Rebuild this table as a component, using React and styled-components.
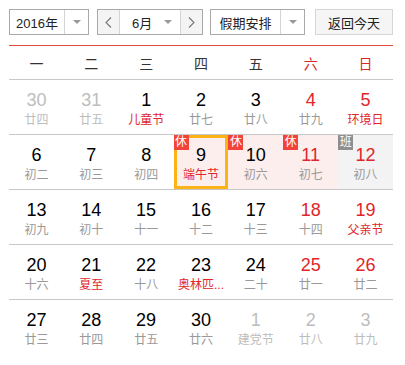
import React from 'react'
import styled, { createGlobalStyle } from 'styled-components'

const GlobalStyle = createGlobalStyle`
body{
  margin:0;
  background:#fff;
  font-family:"Liberation Sans", "Noto Sans CJK SC", sans-serif;
}
`;

const Wrap = styled.div`
width:384px;
padding:9px 12px 10px 9px;
`;

const Toolbar = styled.div`
display:flex;
align-items:center;
height:26px;
`;

const Select = styled.div`
display:flex;
height:26px;
box-sizing:border-box;
border:1px solid #a9a9a9;
margin-right:${props => props.gap || 0}px;
font-size:13px;
color:#222;
background:#fff;
`;

const SelectText = styled.div`
width:${props => props.w}px;
display:flex;
align-items:center;
justify-content:center;
border-right:1px solid #d4d4d4;
`;

const Caret = styled.div`
width:${props => props.w || 23}px;
display:flex;
align-items:center;
justify-content:center;
`;

const Triangle = styled.span`
width:0;
height:0;
border-left:4px solid transparent;
border-right:4px solid transparent;
border-top:4px solid #999;
`;

const ArrowBtn = styled.div`
width:21px;
display:flex;
align-items:center;
justify-content:center;
background:#f4f4f4;
border-${props => props.side}:1px solid #d4d4d4;
`;

const MonthMid = styled.div`
width:60px;
display:flex;
align-items:center;
justify-content:space-between;
padding:0 8px 0 12px;
box-sizing:border-box;
`;

const TodayBtn = styled.div`
width:81px;
height:26px;
box-sizing:border-box;
border:1px solid #d6d6d6;
background:#f5f5f5;
display:flex;
align-items:center;
justify-content:center;
font-size:13px;
color:#222;
`;

const WeekHead = styled.div`
margin-top:10px;
display:grid;
grid-template-columns:repeat(7, 1fr);
border-top:1px solid #e24a40;
border-bottom:1px solid #c8c8c8;
height:33px;
`;

const WeekDay = styled.div`
display:flex;
align-items:center;
justify-content:center;
font-size:14px;
color:${props => props.red ? '#d9282d' : '#333'};
`;

const Grid = styled.div`
display:grid;
grid-template-columns:repeat(7, 1fr);
`;

const Cell = styled.div`
position:relative;
height:55px;
box-sizing:border-box;
border-bottom:${props => props.last ? 'none' : '1px solid #c8c8c8'};
background:${props => props.bg || 'transparent'};
text-align:center;
padding-top:10px;
box-shadow:${props => props.selected ? 'inset 0 0 0 3px #fbb418' : 'none'};
`;

const Num = styled.div`
font-size:18px;
line-height:20px;
color:${props => props.color};
`;

const Lunar = styled.div`
font-size:12px;
line-height:16px;
margin-top:2px;
color:${props => props.color};
white-space:nowrap;
`;

const Badge = styled.span`
position:absolute;
left:0;
top:0;
width:15px;
height:15px;
line-height:15px;
font-size:12px;
color:#fff;
text-align:center;
background:${props => props.type === 'work' ? '#8e8e8e' : '#f2433a'};
z-index:1;
`;

const Chevron = ({ dir }) => (
  <svg width="7" height="11" viewBox="0 0 7 11">
    <path d={dir === 'left' ? 'M6 0.5 L1 5.5 L6 10.5' : 'M1 0.5 L6 5.5 L1 10.5'} fill="none" stroke="#777" strokeWidth="1.1" />
  </svg>
);

const RED = '#e0262b';
const DIM = '#bdbdbd';

const weekDays = ['一', '二', '三', '四', '五', '六', '日'];

// d: day, l: lunar/festival, o: other month, f: festival (red text), w: weekend
const days = [
  { d: 30, l: '廿四', o: true }, { d: 31, l: '廿五', o: true }, { d: 1, l: '儿童节', f: true },
  { d: 2, l: '廿七' }, { d: 3, l: '廿八' }, { d: 4, l: '廿九', w: true }, { d: 5, l: '环境日', f: true, w: true },
  { d: 6, l: '初二' }, { d: 7, l: '初三' }, { d: 8, l: '初四' },
  { d: 9, l: '端午节', f: true, rest: true, sel: true }, { d: 10, l: '初六', rest: true },
  { d: 11, l: '初七', rest: true, w: true }, { d: 12, l: '初八', work: true, w: true },
  { d: 13, l: '初九' }, { d: 14, l: '初十' }, { d: 15, l: '十一' }, { d: 16, l: '十二' },
  { d: 17, l: '十三' }, { d: 18, l: '十四', w: true }, { d: 19, l: '父亲节', f: true, w: true },
  { d: 20, l: '十六' }, { d: 21, l: '夏至', f: true }, { d: 22, l: '十八' }, { d: 23, l: '奥林匹...', f: true },
  { d: 24, l: '二十' }, { d: 25, l: '廿一', w: true }, { d: 26, l: '廿二', w: true },
  { d: 27, l: '廿三' }, { d: 28, l: '廿四' }, { d: 29, l: '廿五' }, { d: 30, l: '廿六' },
  { d: 1, l: '建党节', o: true }, { d: 2, l: '廿八', o: true }, { d: 3, l: '廿九', o: true },
];

const DayCell = ({ day, last }) => {
  const numColor = day.o ? DIM : day.w ? RED : '#000';
  const lunarColor = day.o ? DIM : day.f ? RED : '#999';
  const bg = day.rest ? '#fdeeee' : day.work ? '#f3f3f3' : null;
  return (
    <Cell bg={bg} selected={day.sel} last={last}>
      {day.rest && <Badge>休</Badge>}
      {day.work && <Badge type="work">班</Badge>}
      <Num color={numColor}>{day.d}</Num>
      <Lunar color={lunarColor}>{day.l}</Lunar>
    </Cell>
  );
};

export default function App() {
  return (
    <>
      <GlobalStyle />
      <Wrap>
        <Toolbar>
          <Select gap={8}>
            <SelectText w={54}>2016年</SelectText>
            <Caret><Triangle /></Caret>
          </Select>
          <Select gap={7}>
            <ArrowBtn side="right"><Chevron dir="left" /></ArrowBtn>
            <MonthMid>6月<Triangle /></MonthMid>
            <ArrowBtn side="left"><Chevron dir="right" /></ArrowBtn>
          </Select>
          <Select gap={10}>
            <SelectText w={69}>假期安排</SelectText>
            <Caret><Triangle /></Caret>
          </Select>
          <TodayBtn>返回今天</TodayBtn>
        </Toolbar>
        <WeekHead>
          {weekDays.map((w, i) => <WeekDay key={w} red={i > 4}>{w}</WeekDay>)}
        </WeekHead>
        <Grid>
          {days.map((day, i) => <DayCell key={i} day={day} last={i >= 28} />)}
        </Grid>
      </Wrap>
    </>
  );
}
